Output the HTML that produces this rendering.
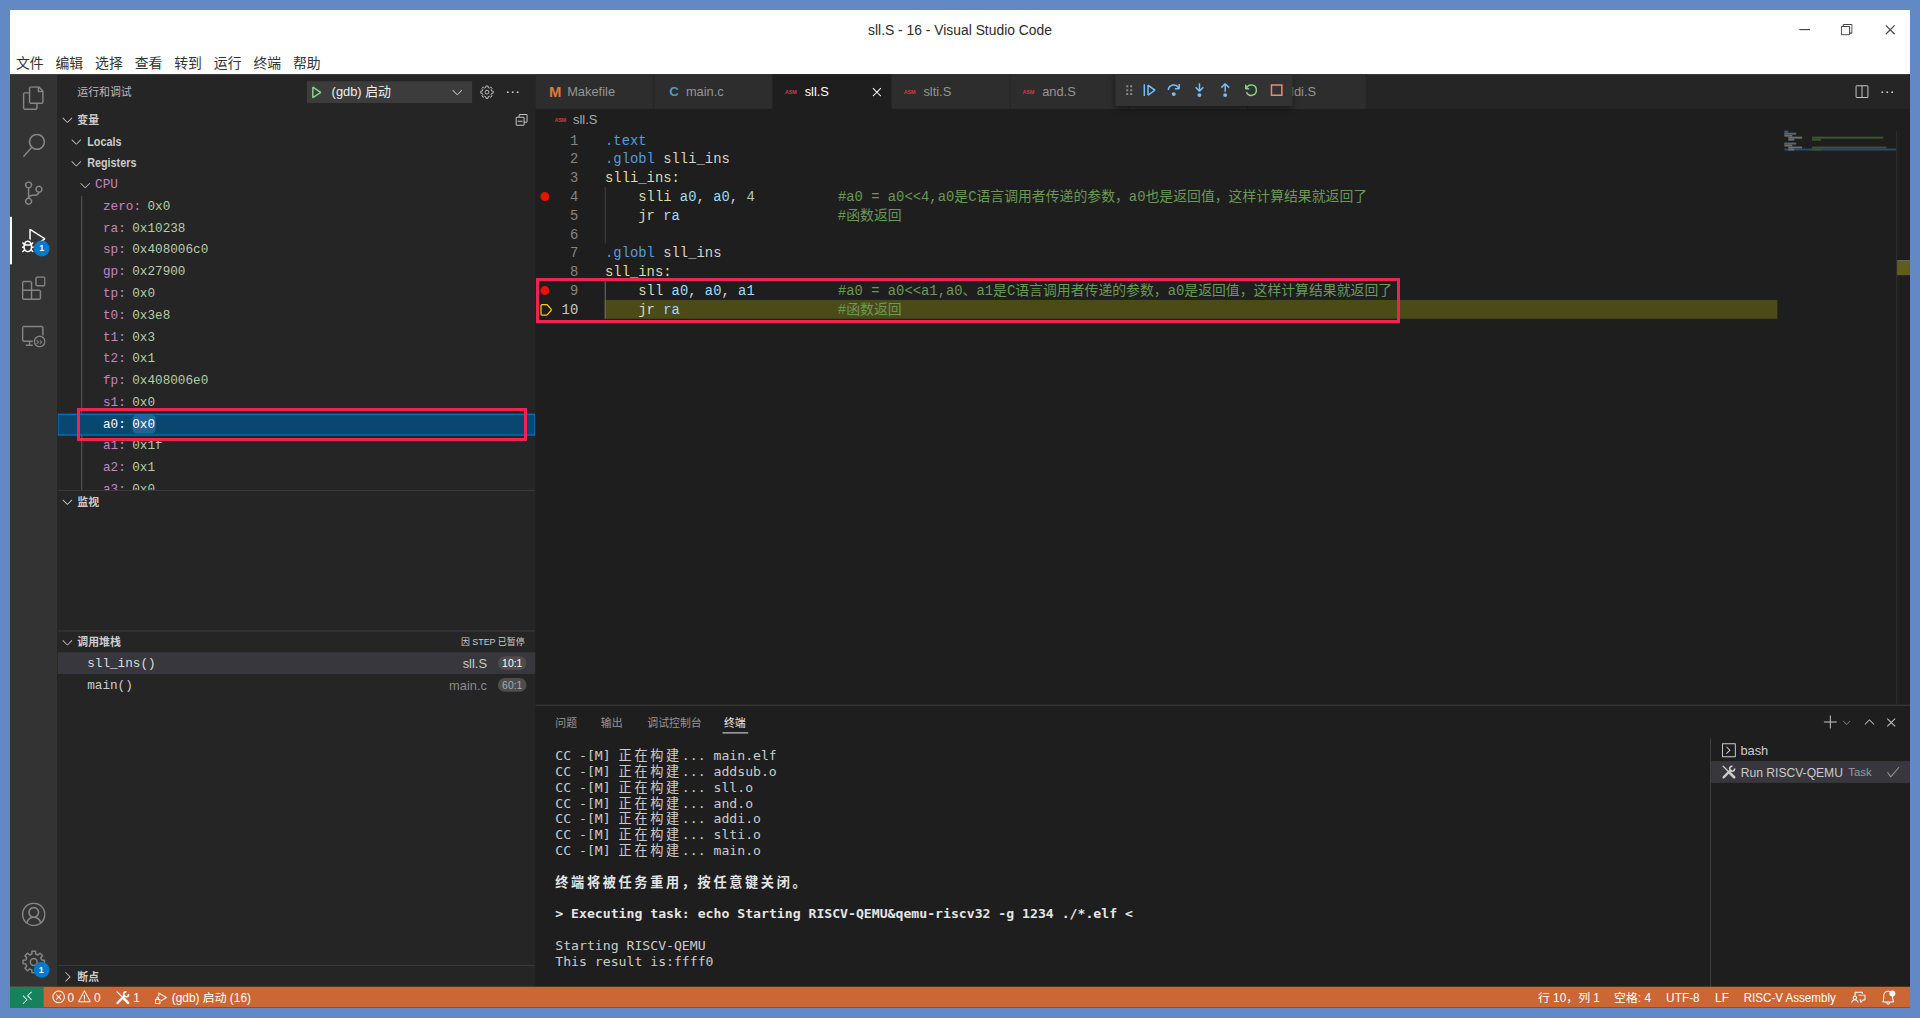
<!DOCTYPE html>
<html lang="zh-CN">
<head>
<meta charset="utf-8">
<title>sll.S - 16 - Visual Studio Code</title>
<style>
html,body{margin:0;padding:0;}
body{width:1920px;height:1018px;overflow:hidden;background:#6388c6;position:relative;
  font-family:"Liberation Sans","Noto Sans CJK SC",sans-serif;font-size:13px;color:#ccc;}
#win{position:absolute;left:10px;top:10px;width:1920px;height:1008px;transform:scale(0.989583);transform-origin:0 0;background:#1e1e1e;overflow:hidden;}
.abs{position:absolute;}
svg{display:block;}
.mono{font-family:"Liberation Mono","Noto Sans CJK SC",monospace;}
/* title */
#titlebar{left:0;top:0;width:1920px;height:65px;background:#fff;}
#title{left:0;width:1920px;top:10px;height:20px;line-height:20px;text-align:center;color:#2b2b2b;font-size:14px;}
#menubar{left:0;top:41.5px;width:1920px;height:25px;color:#333;font-size:14px;line-height:25px;white-space:nowrap;}
#menubar span{display:inline-block;width:40px;text-align:center;}
/* activity bar */
#activity{left:0;top:65px;width:48px;height:921.5px;background:#333333;}
#activity .ic{position:absolute;left:12px;width:24px;height:24px;fill:#858585;}
.badge{width:16px;height:16px;border-radius:8px;background:#007acc;color:#fff;font-size:9px;font-weight:bold;line-height:16px;text-align:center;}
/* sidebar */
#sidebar{left:48px;top:65px;width:483px;height:921.5px;background:#252526;overflow:hidden;}

#sidebar .hdr{left:0;width:483px;height:22px;line-height:22px;font-size:11px;font-weight:bold;color:#ccc;}
#sidebar .hdr .t{position:absolute;left:20px;top:0;}
#sidebar .sep{left:0;width:483px;height:1px;background:#3c3c3c;}
.chev{position:absolute;width:16px;height:16px;fill:#c5c5c5;}
.row{position:absolute;left:0;width:483px;height:22px;line-height:22px;white-space:nowrap;}
.row .t{position:absolute;top:0;}
.row.b .t{font-weight:bold;color:#ccc;font-size:13px;transform:scaleX(.84);transform-origin:0 50%;}
.reg{font-family:"Liberation Mono","Noto Sans CJK SC",monospace;font-size:12.8px;}
.reg .n{color:#c586c0;}
.reg .v{color:#b5cea8;margin-left:6.5px;}

/* editor */
#tabs{left:531px;top:65px;width:1389px;height:35px;background:#252526;}
.tab{position:absolute;top:0;width:119px;height:35px;background:#2d2d2d;border-right:1px solid #252526;line-height:36.5px;font-size:13px;color:#969696;white-space:nowrap;}
.tab .lbl{position:absolute;left:32px;top:0;}
.tab.act{background:#1e1e1e;color:#fff;}
.ficon{position:absolute;left:10px;top:0;width:16px;height:35px;line-height:36px;text-align:center;font-weight:bold;}
.asm{font-size:5.5px;color:#cc3e44;letter-spacing:-0.2px;font-weight:bold;}
#crumbs{left:531px;top:100px;width:1389px;height:22px;line-height:22px;font-size:13px;color:#a9a9a9;}
#code{left:531px;top:122px;width:1389px;height:580px;font-family:"Liberation Mono","Noto Sans CJK SC",monospace;font-size:14px;line-height:19px;color:#d4d4d4;}
.ln{position:absolute;left:0;width:43.2px;margin-top:.8px;height:19px;text-align:right;color:#858585;}
.cl{position:absolute;left:70.3px;margin-top:.8px;height:19px;white-space:pre;}
.k{color:#569cd6}.f{color:#dcdcaa}.r{color:#9cdcfe}.c{color:#6a9955}.n{color:#b5cea8}
.bp{position:absolute;left:5.3px;margin-top:.4px;width:8.6px;height:8.6px;border-radius:5px;background:#e51400;}
.ig{position:absolute;left:69.5px;width:1px;background:#404040;}

/* panel */
#panel{left:531px;top:701.5px;width:1389px;height:285px;background:#1e1e1e;border-top:1px solid #414141;box-sizing:border-box;}
.ptab{position:absolute;top:0;height:35px;line-height:36px;font-size:11px;color:#969696;white-space:nowrap;}
#term{left:20px;top:43.3px;font-family:"DejaVu Sans Mono","Noto Sans CJK SC",monospace;font-size:13.29px;line-height:16px;color:#ccc;white-space:pre;}
#term .z{letter-spacing:2.7px;}
#term b{color:#e5e5e5;}
.trow{position:absolute;left:0;width:200px;height:22px;line-height:23.4px;font-size:13px;color:#ccc;white-space:nowrap;}
/* status */
#status{left:0;top:986.5px;width:1920px;height:21.5px;background:#cc6633;color:#fff;font-size:12px;line-height:23px;white-space:nowrap;}
#status .i{position:absolute;top:0;}
#status svg{position:absolute;top:3px;fill:#fff;}
</style>
</head>
<body>
<div id="win">
<!--TITLE-->
<div id="titlebar" class="abs">
  <div id="title" class="abs">sll.S - 16 - Visual Studio Code</div>
  <svg class="abs" style="left:1808px;top:19px" width="12" height="2" viewBox="0 0 12 2"><rect width="11" height="1.2" y="0.2" fill="#444"/></svg>
  <svg class="abs" style="left:1850px;top:14px" width="12" height="12" viewBox="0 0 12 12" fill="none" stroke="#444" stroke-width="1.1"><rect x="0.6" y="2.6" width="8.4" height="8.4" rx="0.8"/><path d="M2.6 2.6V1.2q0-.6.6-.6h7.6q.6 0 .6.6v7.6q0 .6-.6.6H9"/></svg>
  <svg class="abs" style="left:1895px;top:15px" width="10" height="10" viewBox="0 0 10 10" stroke="#444" stroke-width="1.2"><path d="M.5.5l9 9M9.5.5l-9 9"/></svg>
</div>
<div id="menubar" class="abs"><span>文件</span><span>编辑</span><span>选择</span><span>查看</span><span>转到</span><span>运行</span><span>终端</span><span>帮助</span></div>
<!--ACTIVITY-->
<div id="activity" class="abs">
  <svg class="ic" style="top:12px" viewBox="0 0 24 24"><path d="M17.5 0h-9L7 1.5V6H2.5L1 7.5v15.07L2.5 24h12.07L16 22.57V18h4.7l1.3-1.43V4.5L17.5 0zm0 2.12l2.38 2.38H17.5V2.12zm-3 20.38h-12v-15H7v9.07L8.5 18h6v4.5zm6-6h-12v-15H16V6h4.5v10.5z"/></svg>
  <svg class="ic" style="top:60px" viewBox="0 0 24 24"><path d="M15.25 0a8.25 8.25 0 0 0-6.18 13.72L1 22.88l1.12 1 8.05-9.12A8.251 8.251 0 1 0 15.25.01V0zm0 15a6.75 6.75 0 1 1 0-13.5 6.75 6.75 0 0 1 0 13.5z"/></svg>
  <svg class="ic" style="top:108px" viewBox="0 0 24 24"><path d="M21.007 8.222A3.738 3.738 0 0 0 15.045 5.2a3.737 3.737 0 0 0 1.156 6.583 2.988 2.988 0 0 1-2.668 1.67h-2.99a4.456 4.456 0 0 0-2.989 1.165V7.4a3.737 3.737 0 1 0-1.494 0v9.117a3.776 3.776 0 1 0 1.816.099 2.99 2.99 0 0 1 2.668-1.667h2.99a4.484 4.484 0 0 0 4.223-3.039 3.736 3.736 0 0 0 3.25-3.687zM4.565 3.738a2.242 2.242 0 1 1 4.484 0 2.242 2.242 0 0 1-4.484 0zm4.484 16.441a2.242 2.242 0 1 1-4.484 0 2.242 2.242 0 0 1 4.484 0zm8.221-9.715a2.242 2.242 0 1 1 0-4.485 2.242 2.242 0 0 1 0 4.485z"/></svg>
  <div class="abs" style="left:0;top:144px;width:2px;height:48px;background:#fff"></div>
  <svg class="ic" style="top:156px;fill:#fff" viewBox="0 0 24 24"><path d="M10.94 13.5l-1.32 1.32a3.73 3.73 0 0 0-7.24 0L1.06 13.5 0 14.56l1.72 1.72-.22.22V18H0v1.5h1.5v.08c.077.489.214.966.41 1.42L0 22.94 1.06 24l1.65-1.65A4.308 4.308 0 0 0 6 24a4.31 4.31 0 0 0 3.29-1.65L10.94 24 12 22.94 10.09 21c.198-.464.336-.951.41-1.45v-.1H12V18h-1.5v-1.5l-.22-.22L12 14.56l-1.06-1.06zM6 13.5a2.25 2.25 0 0 1 2.25 2.25h-4.5A2.25 2.25 0 0 1 6 13.5zm3 6a3.33 3.33 0 0 1-3 3 3.33 3.33 0 0 1-3-3v-2.25h6v2.25zm14.76-9.9v1.26L13.5 17.37V15.6l8.5-5.37L9 2v9.46a5.07 5.07 0 0 0-1.5-.72V.63L8.64 0l15.12 9.6z"/></svg>
  <div class="abs badge" style="left:24px;top:168px">1</div>
  <svg class="ic" style="top:204px" viewBox="0 0 24 24"><path d="M13.5 1.5L15 0h7.5L24 1.5V9l-1.5 1.5H15L13.5 9V1.5zm1.5 0V9h7.5V1.5H15zM0 15V6l1.5-1.5H9L10.5 6v7.5H18l1.5 1.5v7.5L18 24H1.5L0 22.5V15zm9-1.5V6H1.5v7.5H9zM9 15H1.5v7.5H9V15zm1.5 7.5H18V15h-7.5v7.5z"/></svg>
  <svg class="ic" style="top:252px" viewBox="0 0 24 24"><path d="M1.5 2h19L22 3.500V12h-1.500V3.500h-19v13.500H11v1.500H8.500V21H11v1.500H4V21h3v-2.500H1.500L0 17V3.500L1.500 2z"/><path fill-rule="evenodd" d="M18 12a6 6 0 1 0 0 12 6 6 0 0 0 0-12zm0 1.400a4.600 4.600 0 1 1 0 9.200 4.600 4.600 0 0 1 0-9.200zM15.300 18.600l2.200-2.200.7.700-1.500 1.500 1.500 1.500-.7.700-2.200-2.200zm3.200 0l2.200-2.200.7.700-1.500 1.500 1.500 1.500-.7.700-2.200-2.200z" transform="translate(36,0) scale(-1,1)"/></svg>
  <svg class="ic" style="top:837px" viewBox="0 0 16 16"><path d="M16 7.992C16 3.580 12.416 0 8 0S0 3.580 0 7.992c0 2.430 1.104 4.620 2.832 6.090.16.016.32.016.32.032.144.112.288.224.448.336.8.048.144.111.224.175A7.980 7.980 0 0 0 8.016 16a7.980 7.980 0 0 0 4.480-1.375c.080-.48.144-.111.224-.160.144-.111.304-.223.448-.335.016-.16.032-.16.032-.032 1.696-1.487 2.800-3.676 2.800-6.106zm-8 7.001c-1.504 0-2.880-.480-4.016-1.279.016-.128.048-.255.080-.383a4.170 4.170 0 0 1 .416-.991c.176-.304.384-.576.640-.816.240-.240.528-.463.816-.639.304-.176.624-.304.976-.400A4.150 4.150 0 0 1 8 10.342a4.185 4.185 0 0 1 2.928 1.166c.368.368.656.800.864 1.295.112.288.192.592.240.911A7.030 7.030 0 0 1 8 14.993zm-2.448-7.400a2.490 2.490 0 0 1-.208-1.024c0-.351.064-.703.208-1.023.144-.320.336-.607.576-.847.240-.240.528-.431.848-.575.320-.144.672-.208 1.024-.208.368 0 .704.064 1.024.208.320.144.608.336.848.575.240.240.432.528.576.847.144.320.208.672.208 1.023 0 .368-.064.704-.208 1.023a2.840 2.840 0 0 1-.576.848 2.840 2.840 0 0 1-.848.575 2.715 2.715 0 0 1-2.064 0 2.840 2.840 0 0 1-.848-.575 2.526 2.526 0 0 1-.560-.848zm7.424 5.306c0-.032-.016-.048-.016-.080a5.220 5.220 0 0 0-.688-1.406 4.883 4.883 0 0 0-1.088-1.135 5.207 5.207 0 0 0-1.040-.608 2.820 2.820 0 0 0 .464-.383 4.200 4.200 0 0 0 .624-.784 3.624 3.624 0 0 0 .528-1.934 3.710 3.710 0 0 0-.288-1.470 3.799 3.799 0 0 0-.816-1.199 3.845 3.845 0 0 0-1.200-.800 3.720 3.720 0 0 0-1.472-.287 3.720 3.720 0 0 0-1.472.288 3.631 3.631 0 0 0-1.200.815 3.840 3.840 0 0 0-.800 1.199 3.710 3.710 0 0 0-.288 1.470c0 .352.048.688.144 1.007.096.336.224.640.400.927.160.288.384.544.624.784.144.144.304.271.480.383a5.120 5.120 0 0 0-1.040.624c-.416.320-.784.703-1.088 1.119a4.999 4.999 0 0 0-.688 1.406c-.16.032-.16.064-.16.080C1.776 11.636.992 9.910.992 7.992.992 4.140 4.144.991 8 .991s7.008 3.149 7.008 7.001a6.960 6.960 0 0 1-2.032 4.907z"/></svg>
  <svg class="ic" style="top:885px;fill:none;stroke:#858585;stroke-width:1;stroke-linejoin:round" viewBox="0 0 16 16"><path d="M13.34 6.67 L15.20 6.80 L15.20 9.20 L13.34 9.33 L12.71 10.84 L13.94 12.24 L12.24 13.94 L10.84 12.71 L9.33 13.34 L9.20 15.20 L6.80 15.20 L6.67 13.34 L5.16 12.71 L3.76 13.94 L2.06 12.24 L3.29 10.84 L2.66 9.33 L0.80 9.20 L0.80 6.80 L2.66 6.67 L3.29 5.16 L2.06 3.76 L3.76 2.06 L5.16 3.29 L6.67 2.66 L6.80 0.80 L9.20 0.80 L9.33 2.66 L10.84 3.29 L12.24 2.06 L13.94 3.76 L12.71 5.16Z"/><circle cx="8" cy="8" r="2.3"/></svg>
  <div class="abs badge" style="left:23.5px;top:896.5px">1</div>
</div>
<!--SIDEBAR-->
<div id="sidebar" class="abs">
<div class="abs" style="left:20px;top:1px;height:35px;line-height:35px;font-size:11px;color:#bbb">运行和调试</div>
<div class="abs" style="left:252px;top:7px;width:167px;height:22px;background:#3c3c3c"></div>
<svg class="abs" style="left:253px;top:10px" width="16" height="16" viewBox="0 0 16 16" fill="#89d185"><path d="M4.25 3l1.166-.624 8 5.333v1.248l-8 5.334-1.166-.624V3zm1.5 1.401v7.864l5.898-3.932L5.750 4.401z"/></svg>
<div class="abs" style="left:277px;top:7px;height:22px;line-height:22px;font-size:13px;color:#f0f0f0">(gdb) 启动</div>
<svg class="chev" style="left:396px;top:10px" viewBox="0 0 16 16"><path d="M7.976 10.072l4.357-4.357.62.618L8.284 11h-.618L3 6.333l.619-.618 4.357 4.357z"/></svg>
<svg class="abs" style="left:427px;top:11px;fill:none;stroke:#c5c5c5;stroke-width:1.1;stroke-linejoin:round" width="14" height="14" viewBox="0 0 16 16"><path d="M13.34 6.67 L15.20 6.80 L15.20 9.20 L13.34 9.33 L12.71 10.84 L13.94 12.24 L12.24 13.94 L10.84 12.71 L9.33 13.34 L9.20 15.20 L6.80 15.20 L6.67 13.34 L5.16 12.71 L3.76 13.94 L2.06 12.24 L3.29 10.84 L2.66 9.33 L0.80 9.20 L0.80 6.80 L2.66 6.67 L3.29 5.16 L2.06 3.76 L3.76 2.06 L5.16 3.29 L6.67 2.66 L6.80 0.80 L9.20 0.80 L9.33 2.66 L10.84 3.29 L12.24 2.06 L13.94 3.76 L12.71 5.16Z"/><circle cx="8" cy="8" r="2.2"/></svg>
<svg class="abs" style="left:452px;top:10px" width="16" height="16" viewBox="0 0 16 16" fill="#c5c5c5"><path d="M4 8a1 1 0 1 1-2 0 1 1 0 0 1 2 0zm5 0a1 1 0 1 1-2 0 1 1 0 0 1 2 0zm5 0a1 1 0 1 1-2 0 1 1 0 0 1 2 0z"/></svg>
<div class="abs hdr" style="top:35px"><svg class="chev" style="left:2px;top:3px" viewBox="0 0 16 16"><path d="M7.976 10.072l4.357-4.357.62.618L8.284 11h-.618L3 6.333l.619-.618 4.357 4.357z"/></svg><span class="t">变量</span></div>
<svg class="abs" style="left:461px;top:38px" width="16" height="16" viewBox="0 0 16 16" fill="#c5c5c5"><path d="M9 9H4v1h5V9z"/><path fill-rule="evenodd" d="M5 3l1-1h7l1 1v7l-1 1h-2v2l-1 1H3l-1-1V6l1-1h2V3zm1 2h4l1 1v4h2V3H6v2zm4 1H3v7h7V6z"/></svg>
<div class="abs" style="left:0;top:57px;width:483px;height:363px;overflow:hidden">
<div class="row b" style="top:0px"><svg class="chev" style="left:11px;top:3px" viewBox="0 0 16 16"><path d="M7.976 10.072l4.357-4.357.62.618L8.284 11h-.618L3 6.333l.619-.618 4.357 4.357z"/></svg><span class="t" style="left:30px">Locals</span></div>
<div class="row b" style="top:22px"><svg class="chev" style="left:11px;top:3px" viewBox="0 0 16 16"><path d="M7.976 10.072l4.357-4.357.62.618L8.284 11h-.618L3 6.333l.619-.618 4.357 4.357z"/></svg><span class="t" style="left:30px">Registers</span></div>
<div class="row reg" style="top:44px"><svg class="chev" style="left:20px;top:3px" viewBox="0 0 16 16"><path d="M7.976 10.072l4.357-4.357.62.618L8.284 11h-.618L3 6.333l.619-.618 4.357 4.357z"/></svg><span class="t n" style="left:38px">CPU</span></div>
<div class="abs" style="left:24px;top:66px;width:1px;height:400px;background:#585858"></div>
<div class="row reg" style="top:66px"><span class="t" style="left:46px"><span class="n">zero:</span><span class="v">0x0</span></span></div>
<div class="row reg" style="top:88px"><span class="t" style="left:46px"><span class="n">ra:</span><span class="v">0x10238</span></span></div>
<div class="row reg" style="top:110px"><span class="t" style="left:46px"><span class="n">sp:</span><span class="v">0x408006c0</span></span></div>
<div class="row reg" style="top:132px"><span class="t" style="left:46px"><span class="n">gp:</span><span class="v">0x27900</span></span></div>
<div class="row reg" style="top:154px"><span class="t" style="left:46px"><span class="n">tp:</span><span class="v">0x0</span></span></div>
<div class="row reg" style="top:176px"><span class="t" style="left:46px"><span class="n">t0:</span><span class="v">0x3e8</span></span></div>
<div class="row reg" style="top:198px"><span class="t" style="left:46px"><span class="n">t1:</span><span class="v">0x3</span></span></div>
<div class="row reg" style="top:220px"><span class="t" style="left:46px"><span class="n">t2:</span><span class="v">0x1</span></span></div>
<div class="row reg" style="top:242px"><span class="t" style="left:46px"><span class="n">fp:</span><span class="v">0x408006e0</span></span></div>
<div class="row reg" style="top:264px"><span class="t" style="left:46px"><span class="n">s1:</span><span class="v">0x0</span></span></div>
<div class="row reg" style="top:286px;background:#094771;outline:1px solid #007fd4;outline-offset:-1px"><span class="t" style="left:46px"><span class="n" style="color:#fff">a0:</span><span class="v" style="color:#fff;background:rgba(86,156,214,.35);border-radius:4px;padding:2px 0">0x0</span></span></div>
<div class="row reg" style="top:308px"><span class="t" style="left:46px"><span class="n">a1:</span><span class="v">0x1f</span></span></div>
<div class="row reg" style="top:330px"><span class="t" style="left:46px"><span class="n">a2:</span><span class="v">0x1</span></span></div>
<div class="row reg" style="top:352px"><span class="t" style="left:46px"><span class="n">a3:</span><span class="v">0x0</span></span></div>
</div>
<div class="abs sep" style="top:420px"></div>
<div class="abs hdr" style="top:420.7px"><svg class="chev" style="left:2px;top:3px" viewBox="0 0 16 16"><path d="M7.976 10.072l4.357-4.357.62.618L8.284 11h-.618L3 6.333l.619-.618 4.357 4.357z"/></svg><span class="t">监视</span></div>
<div class="abs sep" style="top:562px"></div>
<div class="abs hdr" style="top:563px"><svg class="chev" style="left:2px;top:3px" viewBox="0 0 16 16"><path d="M7.976 10.072l4.357-4.357.62.618L8.284 11h-.618L3 6.333l.619-.618 4.357 4.357z"/></svg><span class="t">调用堆栈</span><span class="abs" style="right:11px;top:0;font-weight:normal;font-size:9px;color:#ccc">因 STEP 已暂停</span></div>
<div class="row" style="top:584px;background:#37373d;line-height:23px"><span class="t mono" style="left:30px;font-size:12.8px;color:#ddd">sll_ins()</span><span class="abs" style="right:49px;top:0;font-size:13px;color:#ccc">sll.S</span><span class="abs" style="right:9px;top:4px;height:14px;line-height:14px;width:29px;text-align:center;border-radius:7px;background:#4d4d4d;color:#fff;font-size:10.5px">10:1</span></div>
<div class="row" style="top:606px;line-height:23px"><span class="t mono" style="left:30px;font-size:12.8px;color:#ccc">main()</span><span class="abs" style="right:49px;top:0;font-size:13px;color:#8a8a8a">main.c</span><span class="abs" style="right:9px;top:4px;height:14px;line-height:14px;width:29px;text-align:center;border-radius:7px;background:#4d4d4d;color:#aaa;font-size:10.5px">60:1</span></div>
<div class="abs sep" style="top:899.5px"></div>
<div class="abs hdr" style="top:900.5px"><svg class="chev" style="left:2px;top:3px" viewBox="0 0 16 16"><path d="M10.072 8.024L5.715 3.667l.618-.62L11 7.716v.618L6.333 13l-.618-.619 4.357-4.357z"/></svg><span class="t">断点</span></div>
</div>
<!--EDITOR-->
<div id="tabs" class="abs">
<div class="tab" style="left:0px"><span class="ficon" style="left:12px;color:#e37933;font-size:15px">M</span><span class="lbl">Makefile</span></div>
<div class="tab" style="left:120px"><span class="ficon" style="left:12px;color:#519aba;font-size:13.5px">C</span><span class="lbl">main.c</span></div>
<div class="tab act" style="left:240px"><span class="ficon asm">ASM</span><span class="lbl">sll.S</span><svg class="abs" style="left:97px;top:9.5px" width="16" height="16" viewBox="0 0 16 16" fill="#fff"><path d="M8 8.707l3.646 3.647.708-.707L8.707 8l3.647-3.646-.707-.708L8 7.293 4.354 3.646l-.707.708L7.293 8l-3.646 3.646.707.708L8 8.707z"/></svg></div>
<div class="tab" style="left:360px"><span class="ficon asm">ASM</span><span class="lbl">slti.S</span></div>
<div class="tab" style="left:480px"><span class="ficon asm">ASM</span><span class="lbl">and.S</span></div>
<div class="tab" style="left:600px"><span class="ficon asm">ASM</span><span class="lbl">addsub.S</span></div>
<div class="tab" style="left:720px"><span class="ficon asm">ASM</span><span class="lbl">addi.S</span></div>
<svg class="abs" style="left:1332px;top:9.5px" width="16" height="16" viewBox="0 0 16 16" fill="#c5c5c5"><path d="M14 1H3L2 2v11l1 1h11l1-1V2l-1-1zM8 13H3V2h5v11zm6 0H9V2h5v11z"/></svg>
<svg class="abs" style="left:1358px;top:9.5px" width="16" height="16" viewBox="0 0 16 16" fill="#c5c5c5"><path d="M4 8a1 1 0 1 1-2 0 1 1 0 0 1 2 0zm5 0a1 1 0 1 1-2 0 1 1 0 0 1 2 0zm5 0a1 1 0 1 1-2 0 1 1 0 0 1 2 0z"/></svg>
</div>
<div class="abs" style="left:1116.5px;top:65px;width:179px;height:32px;background:#333;box-shadow:0 2px 6px rgba(0,0,0,.5);clip-path:inset(0 -10px -10px -10px)">
<svg class="abs" style="left:6.3px;top:7.5px" width="16" height="16" viewBox="0 0 16 16" fill="#8a8a8a"><path d="M5 3h2v2H5zm0 4h2v2H5zm0 4h2v2H5zm4-8h2v2H9zm0 4h2v2H9zm0 4h2v2H9z"/></svg>
<svg class="abs" style="left:26px;top:7.5px" width="16" height="16" viewBox="0 0 16 16" fill="#75beff"><path d="M2.5 2H4v12H2.5V2zm4.936.39L6.25 3v10l1.186.61 7-5V7.39l-7-5zM12.71 8l-4.96 3.543V4.457L12.71 8z"/></svg>
<svg class="abs" style="left:51.8px;top:7.5px" width="16" height="16" viewBox="0 0 16 16" fill="#75beff"><path d="M14.25 5.75v-4h-1.5v2.542c-1.145-1.359-2.911-2.209-4.84-2.209-3.177 0-5.92 2.307-6.16 5.398l-.02.269h1.501l.022-.226c.212-2.195 2.202-3.94 4.656-3.94 1.736 0 3.244.875 4.05 2.166h-2.83v1.5h4.163l.962-.975V5.75h-.004zM8 14a2 2 0 1 0 0-4 2 2 0 0 0 0 4z"/></svg>
<svg class="abs" style="left:77px;top:7.5px" width="16" height="16" viewBox="0 0 16 16" fill="#75beff"><path d="M8 9.532h.542l3.905-3.905-1.061-1.06-2.637 2.61V1H7.251v6.177l-2.637-2.61-1.061 1.06 3.905 3.905H8zm1.956 3.481a2 2 0 1 1-4 0 2 2 0 0 1 4 0z"/></svg>
<svg class="abs" style="left:103.1px;top:7.5px" width="16" height="16" viewBox="0 0 16 16" fill="#75beff"><path d="M8 1h-.542L3.553 4.905l1.061 1.06 2.637-2.61v6.177h1.498V3.355l2.637 2.61 1.061-1.06L8.542 1H8zm1.956 12.013a2 2 0 1 1-4 0 2 2 0 0 1 4 0z"/></svg>
<svg class="abs" style="left:129.5px;top:7.5px" width="16" height="16" viewBox="0 0 16 16" fill="#89d185"><path d="M12.75 8a4.5 4.5 0 0 1-8.61 1.834l-1.391.565A6.001 6.001 0 0 0 14.25 8 6 6 0 0 0 3.5 4.334V2.5H2v4l.75.75h3.5v-1.5H4.352A4.5 4.5 0 0 1 12.75 8z"/></svg>
<svg class="abs" style="left:155.6px;top:7.5px" width="16" height="16" viewBox="0 0 16 16" fill="#f48771"><path d="M2 2v12h12V2H2zm10.5 10.5h-9v-9h9v9z"/></svg>
</div>
<div id="crumbs" class="abs"><span class="abs asm" style="left:17px;top:0;width:16px;text-align:center">ASM</span><span class="abs" style="left:38px;top:0">sll.S</span></div>
<div id="code" class="abs">
<div class="abs" style="left:70.3px;top:171px;width:1185px;height:19px;background:#4b4b18"></div>
<div class="ig" style="top:57px;height:57px"></div>
<div class="ig" style="top:152px;height:38px;background:#707070"></div>
<div class="ln" style="top:0px">1</div><div class="cl" style="top:0px"><span class="k">.text</span></div>
<div class="ln" style="top:19px">2</div><div class="cl" style="top:19px"><span class="k">.globl</span> slli_ins</div>
<div class="ln" style="top:38px">3</div><div class="cl" style="top:38px"><span class="f">slli_ins:</span></div>
<div class="ln" style="top:57px">4</div><div class="cl" style="top:57px">    <span class="f">slli</span> <span class="r">a0</span>, <span class="r">a0</span>, <span class="n">4</span>          <span class="c">#a0 = a0&lt;&lt;4,a0是C语言调用者传递的参数，a0也是返回值，这样计算结果就返回了</span></div>
<div class="ln" style="top:76px">5</div><div class="cl" style="top:76px">    <span class="f">jr</span> <span class="r">ra</span>                   <span class="c">#函数返回</span></div>
<div class="ln" style="top:95px">6</div><div class="cl" style="top:95px"></div>
<div class="ln" style="top:114px">7</div><div class="cl" style="top:114px"><span class="k">.globl</span> sll_ins</div>
<div class="ln" style="top:133px">8</div><div class="cl" style="top:133px"><span class="f">sll_ins:</span></div>
<div class="ln" style="top:152px">9</div><div class="cl" style="top:152px">    <span class="f">sll</span> <span class="r">a0</span>, <span class="r">a0</span>, <span class="r">a1</span>          <span class="c">#a0 = a0&lt;&lt;a1,a0、a1是C语言调用者传递的参数，a0是返回值，这样计算结果就返回了</span></div>
<div class="ln" style="top:171px;color:#c6c6c6">10</div><div class="cl" style="top:171px">    <span class="f">jr</span> <span class="r">ra</span>                   <span class="c">#函数返回</span></div>
<div class="bp" style="top:62px"></div>
<div class="bp" style="top:157px"></div>
<svg class="abs" style="left:2px;top:172.5px" width="16" height="16" viewBox="0 0 16 16" fill="#ffcc00"><path d="M14.5 7.15l-4.26-4.74L9.31 2H4.25L3 3.25v9.5L4.25 14h5.06l.93-.42 4.26-4.73V7.15zm-5.19 5.6H4.25v-9.5h5.06L13.570 8l-4.260 4.750z"/></svg>
<div class="abs" style="left:1262px;top:0px;width:4px;height:2px;background:#3c5f86"></div>
<div class="abs" style="left:1262px;top:2px;width:12px;height:2px;background:#56657a"></div>
<div class="abs" style="left:1262px;top:4px;width:8px;height:2px;background:#6e6e5c"></div>
<div class="abs" style="left:1266px;top:6px;width:14px;height:2px;background:#6b7075"></div>
<div class="abs" style="left:1290px;top:6px;width:72px;height:2px;background:#3d5533"></div>
<div class="abs" style="left:1266px;top:8px;width:6px;height:2px;background:#6b7075"></div>
<div class="abs" style="left:1290px;top:8px;width:9px;height:2px;background:#3d5533"></div>
<div class="abs" style="left:1262px;top:12px;width:12px;height:2px;background:#56657a"></div>
<div class="abs" style="left:1262px;top:14px;width:8px;height:2px;background:#6e6e5c"></div>
<div class="abs" style="left:1266px;top:16px;width:14px;height:2px;background:#6b7075"></div>
<div class="abs" style="left:1290px;top:16px;width:75px;height:2px;background:#3d5533"></div>
<div class="abs" style="left:1262px;top:18px;width:113px;height:2px;background:#2c4a66"></div>
<div class="abs" style="left:1266px;top:18px;width:6px;height:2px;background:#6b7075"></div>
<div class="abs" style="left:1290px;top:18px;width:9px;height:2px;background:#3d5533"></div>
<div class="abs" style="left:1375px;top:0;width:1px;height:580px;background:#303030"></div>
<div class="abs" style="left:1376px;top:131.7px;width:13px;height:14px;background:#5d5d1c"></div>
<div class="abs" style="left:1376px;top:130.7px;width:13px;height:1.5px;background:#8a8a6a"></div>
</div>
<!--PANEL-->
<div id="panel" class="abs">
<span class="ptab" style="left:20px;">问题</span>
<span class="ptab" style="left:66px;">输出</span>
<span class="ptab" style="left:113px;">调试控制台</span>
<span class="ptab" style="left:190.5px;color:#e7e7e7;">终端</span>
<div class="abs" style="left:189px;top:27.8px;width:26px;height:1px;background:#e7e7e7"></div>
<svg class="abs" style="left:1300.5px;top:9px" width="16" height="16" viewBox="0 0 16 16" fill="#c5c5c5"><path d="M14 7v1H8v6H7V8H1V7h6V1h1v6h6z"/></svg>
<svg class="abs" style="left:1319px;top:11px" width="12" height="12" viewBox="0 0 16 16" fill="#8a8a8a"><path d="M7.976 10.072l4.357-4.357.62.618L8.284 11h-.618L3 6.333l.619-.618 4.357 4.357z"/></svg>
<svg class="abs" style="left:1339.5px;top:9px" width="16" height="16" viewBox="0 0 16 16" fill="#c5c5c5"><path d="M8.024 5.928l-4.357 4.357-.62-.618L7.716 5h.618L13 9.667l-.619.618-4.357-4.357z"/></svg>
<svg class="abs" style="left:1362px;top:9px" width="16" height="16" viewBox="0 0 16 16" fill="#c5c5c5"><path d="M8 8.707l3.646 3.647.708-.707L8.707 8l3.647-3.646-.707-.708L8 7.293 4.354 3.646l-.707.708L7.293 8l-3.646 3.646.707.708L8 8.707z"/></svg>
<div id="term" class="abs">CC -[M] <span class="z">正在构建</span>... main.elf
CC -[M] <span class="z">正在构建</span>... addsub.o
CC -[M] <span class="z">正在构建</span>... sll.o
CC -[M] <span class="z">正在构建</span>... and.o
CC -[M] <span class="z">正在构建</span>... addi.o
CC -[M] <span class="z">正在构建</span>... slti.o
CC -[M] <span class="z">正在构建</span>... main.o

<b><span class="z">终端将被任务重用，按任意键关闭。</span></b>

<b>&gt; Executing task: echo Starting RISCV-QEMU&amp;qemu-riscv32 -g 1234 ./*.elf &lt;</b>

Starting RISCV-QEMU
This result is:ffff0</div>
<div class="abs" style="left:1186.6px;top:33.8px;width:1px;height:251px;background:#414141"></div>
<div class="abs" style="left:1187.6px;top:34.8px;width:201.4px;height:250px">
<div class="trow" style="top:0"><svg class="abs" style="left:10px;top:3px" width="16" height="16" viewBox="0 0 16 16" fill="#ccc"><path d="M1.5 1h13l.5.5v13l-.5.5h-13l-.5-.5v-13l.5-.5zM2 14h12V2H2v12z"/><path d="M5.146 4.854l3.147 3.146-3.147 3.146.708.708L9.707 8 5.854 4.146z"/></svg><span class="abs" style="left:30px">bash</span></div>
<div class="trow" style="top:22px;background:#37373d;width:201px"><svg class="abs" style="left:10px;top:3px" width="16" height="16" viewBox="0 0 16 16" fill="none" stroke="#ccc" stroke-linecap="round"><path d="M2.200 2.200L9 9" stroke-width="1.300"/><path d="M9.300 9.300l4 4" stroke-width="2.700"/><path d="M2.600 13.400L9.600 6.400" stroke-width="2.300"/><path d="M13.790 4.920A2.500 2.500 0 1 1 11.080 2.210" stroke-width="1.600"/></svg><span class="abs" style="left:30px;transform:scaleX(.94);transform-origin:0 50%">Run RISCV-QEMU</span><span class="abs" style="left:139px;font-size:11.5px;color:#999">Task</span><svg class="abs" style="left:176px;top:3px" width="16" height="16" viewBox="0 0 16 16" fill="#999"><path d="M14.431 3.323l-8.470 10-.790-.036-3.350-4.770.818-.574 2.978 4.240 8.051-9.506.764.646z"/></svg></div>
</div>
</div>
<!--STATUS-->
<div id="status" class="abs">
<div class="abs" style="left:0;top:0;width:34px;height:21.5px;background:#16825d"></div>
<svg style="left:9.5px;top:4px" width="15" height="15" viewBox="0 0 16 16"><path d="M12.904 9.570L8.928 5.596l3.976-3.976-.619-.620L8 5.286v.619l4.285 4.285.619-.620zM3 5.620l4.072 4.070L3 13.763l.619.618L8 10v-.619L3.619 5 3 5.620z"/></svg>
<svg style="left:41.500px;top:3.5px" width="14.5" height="14.5" viewBox="0 0 16 16"><path d="M8.600 1c1.600.1 3.100.9 4.200 2 1.300 1.400 2 3.100 2 5.100 0 1.600-.600 3.100-1.600 4.400-1 1.200-2.400 2.100-4 2.400-1.600.3-3.200.1-4.600-.700-1.400-.800-2.500-2-3.100-3.500C.900 9.200.800 7.500 1.300 6c.500-1.600 1.400-2.900 2.800-3.800C5.400 1.300 7 .900 8.600 1zm.500 12.900c1.300-.3 2.500-1 3.400-2.100.8-1.100 1.300-2.400 1.200-3.800 0-1.600-.600-3.200-1.700-4.300-1-1-2.200-1.600-3.600-1.700-1.300-.1-2.700.2-3.800 1-1.100.800-1.900 1.900-2.300 3.300-.400 1.300-.400 2.700.200 4 .600 1.300 1.500 2.300 2.700 3 1.200.700 2.600.900 3.900.600zM7.900 7.500L10.300 5l.700.700-2.400 2.500 2.400 2.500-.700.700-2.400-2.500-2.400 2.500-.700-.700 2.400-2.500-2.400-2.500.700-.700 2.400 2.500z"/></svg>
<span class="i" style="left:58px">0</span>
<svg style="left:68px;top:3.5px" width="14.5" height="14.5" viewBox="0 0 16 16"><path d="M7.560 1h.880l6.540 12.260-.440.740H1.440L1 13.260 7.560 1zM8 2.280L2.280 13H13.700L8 2.280zM8.625 12v-1h-1.250v1h1.250zm-1.250-2V6h1.250v4h-1.250z"/></svg>
<span class="i" style="left:85px">0</span>
<svg style="left:106px;fill:none" width="16" height="16" viewBox="0 0 16 16" fill="none" stroke="#fff" stroke-linecap="round"><path d="M2.200 2.200L9 9" stroke-width="1.300"/><path d="M9.300 9.300l4 4" stroke-width="2.700"/><path d="M2.600 13.400L9.600 6.400" stroke-width="2.300"/><path d="M13.790 4.920A2.500 2.500 0 1 1 11.080 2.210" stroke-width="1.600"/></svg>
<span class="i" style="left:124.500px">1</span>
<svg style="left:145px" width="16" height="16" viewBox="0 0 16 16"><path d="M5 2.500l9 5.500-6.500 4v-1.200l4.600-2.800L6 4.300V6.500H5v-4zM2 9.500h4.500l.5.500v4l-.5.500H2l-.5-.5v-4l.5-.5zm.5 1v3h3.500v-3H2.500zM3 8.500c0-.8.600-1.500 1.250-1.500S5.500 7.700 5.500 8.500v1h-1v-1c0-.3-.1-.5-.25-.5S4 8.200 4 8.500v1H3v-1z"/></svg>
<span class="i" style="left:163.500px">(gdb) 启动 (16)</span>
<span class="i" style="left:1544px">行 10，列 1</span>
<span class="i" style="left:1621px">空格: 4</span>
<span class="i" style="left:1673.500px">UTF-8</span>
<span class="i" style="left:1723px">LF</span>
<span class="i" style="left:1752px;transform:scaleX(.975);transform-origin:0 50%">RISC-V Assembly</span>
<svg style="left:1860px" width="16" height="16" viewBox="0 0 16 16"><path d="M4.500 2h7.500l.5.5V4h-1V3H5v3.200c.9.300 1.500 1.100 1.500 2.050 0 .700-.350 1.350-.900 1.750 1.300.500 2.200 1.700 2.400 3H7c-.2-1.300-1.300-2.300-2.700-2.300S1.800 11.700 1.600 13H.6c.2-1.300 1.100-2.500 2.400-3-.550-.400-.900-1.050-.900-1.750C2.100 7.300 2.700 6.500 3.600 6.200L4 6V2.500l.5-.5zM4.300 7.100c-.650 0-1.200.500-1.200 1.150s.550 1.150 1.200 1.150 1.200-.500 1.200-1.150-.550-1.150-1.200-1.150z"/><path d="M8 5h6.500l.5.500v5l-.5.500H12.700l-2.200 2.200-.850-.350V11H9v-1h1.650v1.650L12.300 10H14V6H8V5z"/></svg>
<svg style="left:1890px" width="16" height="16" viewBox="0 0 16 16"><path d="M13.377 10.573a7.630 7.630 0 0 1-.383-2.380V6.195a5.115 5.115 0 0 0-1.268-3.446 5.138 5.138 0 0 0-3.242-1.722c-.694-.072-1.400 0-2.070.227-.670.215-1.280.574-1.794 1.053a4.923 4.923 0 0 0-1.208 1.675 5.067 5.067 0 0 0-.431 2.022v2.200a7.610 7.610 0 0 1-.383 2.370L2 12.343l.479.658h3.505c0 .526.215 1.040.586 1.412.37.370.885.586 1.412.586.526 0 1.040-.215 1.411-.586s.587-.886.587-1.412h3.505l.478-.658-.586-1.770zm-4.690 3.147a.997.997 0 0 1-.705.299.997.997 0 0 1-.706-.300.997.997 0 0 1-.300-.705h1.999a.939.939 0 0 1-.287.706zm-5.515-1.710l.371-1.114a8.633 8.633 0 0 0 .443-2.691V6.004c0-.563.120-1.113.347-1.616.227-.514.550-.969.969-1.340.419-.382.910-.670 1.436-.837.538-.180 1.100-.240 1.650-.180a4.147 4.147 0 0 1 2.597 1.400 4.133 4.133 0 0 1 1.004 2.776v2.010c0 .909.144 1.818.443 2.691l.371 1.113h-9.630v-.012z"/><circle cx="12.200" cy="3.800" r="3"/></svg>
</div>
</div>
<div class="abs" style="left:77px;top:408.3px;width:450.1px;height:32.3px;box-sizing:border-box;border:3px solid #ee2350"></div>
<div class="abs" style="left:536.1px;top:277.6px;width:863.9px;height:45.4px;box-sizing:border-box;border:3px solid #ee2350"></div>
</body>
</html>
